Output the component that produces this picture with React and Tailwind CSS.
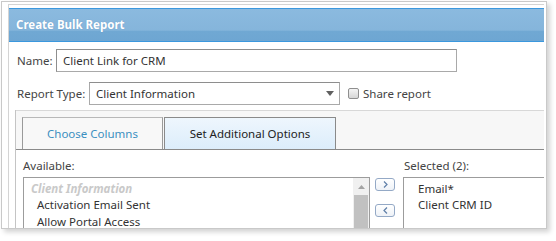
export default function App() {
  return (
    <div className="w-[556px] h-[241px] bg-white pl-px pt-px font-['Noto_Sans',sans-serif] text-[11.5px] text-[#444]">
      <div className="w-[546px] h-[228px] border border-[#c9c9c9] bg-white overflow-hidden shadow-[3px_3px_5px_rgba(0,0,0,0.18)] pl-[6px] pt-[2px] pr-[2px]">
        <div className="h-full border-l border-t border-[#d4d4d4] pt-[3px] flex flex-col">
          {/* header */}
          <div className="h-[34px] shrink-0 border-y border-[#3b98de] bg-[linear-gradient(to_bottom,#8bbadf_0%,#85b5db_66%,#70a8d3_70%,#6ea6d2_100%)] flex items-center pl-[7px]">
            <span className="text-white font-bold text-[11.5px] [text-shadow:0_0_1px_rgba(60,110,160,0.4)]">Create Bulk Report</span>
          </div>

          {/* name row */}
          <div className="mt-[7px] pl-[8px] flex items-center h-[23px]">
            <span className="w-[39px]">Name:</span>
            <div className="w-[401px] h-[23px] border border-[#a9a9a9] border-t-[#8e8e8e] border-l-[#8e8e8e] flex items-center pl-[6px] text-[#333]">
              Client Link for CRM
            </div>
          </div>

          {/* report type row */}
          <div className="mt-[10px] pl-[8px] flex items-center h-[23px]">
            <span className="w-[72px]">Report Type:</span>
            <div className="w-[251px] h-[23px] border border-[#a9a9a9] border-t-[#8e8e8e] flex items-center justify-between pl-[6px] pr-[5px] text-[#333]">
              <span>Client Information</span>
              <svg width="8" height="5" viewBox="0 0 8 5">
                <path d="M0 0H8L4 5Z" fill="#606060" />
              </svg>
            </div>
            <div className="ml-[8px] w-[11px] h-[11px] rounded-[2px] border border-[#8f8f8f] bg-[linear-gradient(to_bottom,#f4f4f4,#d6d6d6)]" />
            <span className="ml-[4px]">Share report</span>
          </div>

          {/* tabs area */}
          <div className="mt-[5px] ml-[6px] flex-1 border-l border-[#c4c4c4] flex flex-col">
            <div className="border-t border-[#d8d8d8] bg-[#f7f7f7] pt-[6px] pl-[6px] flex gap-px border-b border-b-[#8a8a8a]">
              <div className="w-[141px] h-[32px] border border-b-0 border-[#9a9a9a] border-t-[#b8b8b8] bg-[#f8f8f8] flex items-center justify-center text-[#3b8fc0]">
                Choose Columns
              </div>
              <div className="w-[172px] h-[32px] border border-b-0 border-[#8a8a8a] bg-[linear-gradient(to_bottom,#eef6fd,#dcedfb)] flex items-center justify-center text-[#222]">
                Set Additional Options
              </div>
            </div>

            <div className="flex-1 bg-white pl-[7px] pt-[8px] flex">
              {/* available */}
              <div className="w-[347px] flex flex-col">
                <div className="h-[16px] leading-[16px]">Available:</div>
                <div className="mt-[3px] flex-1 border-t border-l border-r border-[#9c9c9c] flex">
                  <div className="flex-1 pt-[3px] leading-[16px] text-[#333]">
                    <div className="pl-[7px] italic font-bold text-[#c9c9c9]">Client Information</div>
                    <div className="pl-[13px]">Activation Email Sent</div>
                    <div className="pl-[13px] mt-px">Allow Portal Access</div>
                  </div>
                  <div className="w-[16px] bg-[#f0f0f0] flex flex-col">
                    <div className="h-[17px] flex items-center justify-center">
                      <svg width="7" height="4" viewBox="0 0 7 4">
                        <path d="M0 4H7L3.5 0Z" fill="#a3a3a3" />
                      </svg>
                    </div>
                    <div className="flex-1 mx-px bg-[#c1c1c1]" />
                  </div>
                </div>
              </div>

              {/* move buttons */}
              <div className="ml-[5px] w-[20px] pt-[20px] flex flex-col gap-[13px]">
                <div className="h-[13px] rounded-[3px] border border-[#94a9c6] bg-[linear-gradient(to_bottom,#ffffff,#eef2f7)] flex items-center justify-center">
                  <svg width="5" height="7" viewBox="0 0 5 7">
                    <path d="M1 0.5L4 3.5L1 6.5" fill="none" stroke="#5f7fa8" strokeWidth="1.2" />
                  </svg>
                </div>
                <div className="h-[13px] rounded-[3px] border border-[#94a9c6] bg-[linear-gradient(to_bottom,#ffffff,#eef2f7)] flex items-center justify-center">
                  <svg width="5" height="7" viewBox="0 0 5 7">
                    <path d="M4 0.5L1 3.5L4 6.5" fill="none" stroke="#5f7fa8" strokeWidth="1.2" />
                  </svg>
                </div>
              </div>

              {/* selected */}
              <div className="ml-[8px] flex-1 flex flex-col">
                <div className="h-[16px] leading-[16px] pl-px">Selected (2):</div>
                <div className="mt-[3px] flex-1 border-t border-l border-[#9c9c9c] pt-[3px] pl-[14px] leading-[16px] text-[#333]">
                  <div>Email*</div>
                  <div>Client CRM ID</div>
                </div>
              </div>
            </div>
          </div>
        </div>
      </div>
    </div>
  );
}
